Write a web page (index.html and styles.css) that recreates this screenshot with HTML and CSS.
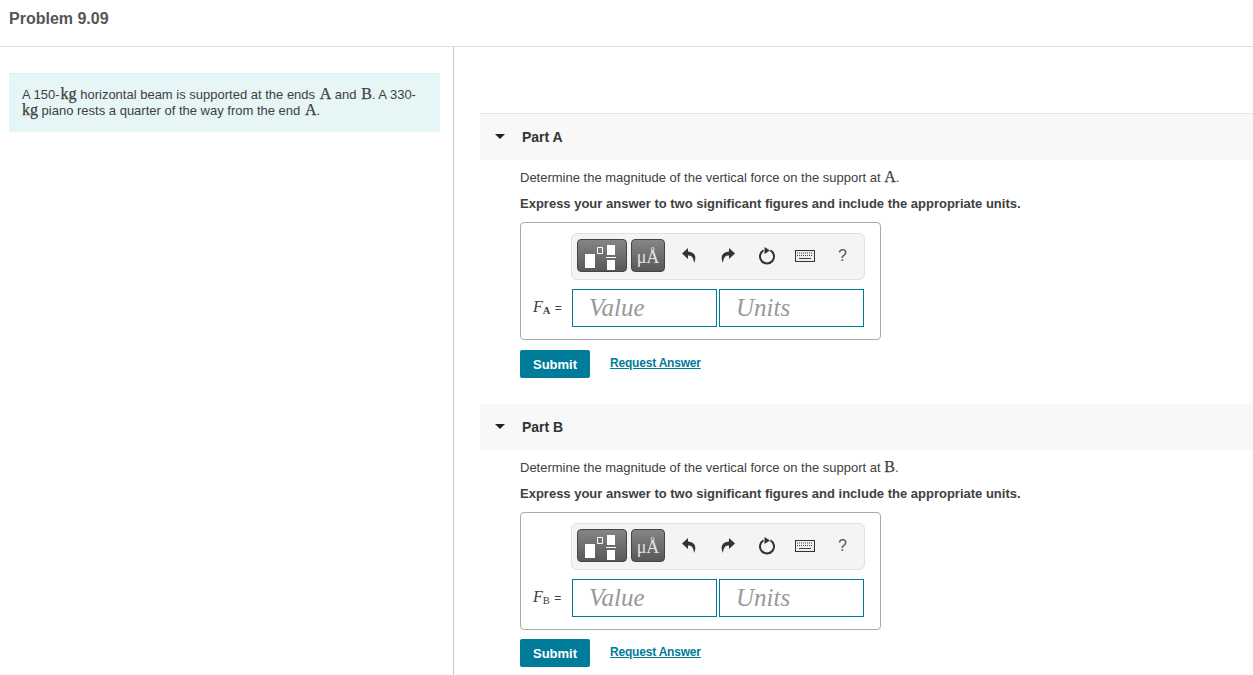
FILE: index.html
```html
<!DOCTYPE html>
<html lang="en">
<head>
<meta charset="utf-8">
<title>Problem 9.09</title>
<link rel="stylesheet" href="styles.css">
</head>
<body>
<header class="top"><h1>Problem 9.09</h1></header>
<main class="layout">
  <aside class="intro">
    <p class="statement">A 150-<span class="m">kg</span> horizontal beam is supported at the ends <span class="m">A</span> and <span class="m">B</span>. A 330-<br><span class="m">kg</span> piano rests a quarter of the way from the end <span class="m">A</span>.</p>
  </aside>
  <section class="parts">
    <div class="part part-a">
      <div class="part-head"><svg class="caret" viewBox="0 0 10 5"><path d="M0 0h10L5 5z"/></svg><h2>Part A</h2></div>
      <div class="part-body">
        <p class="q">Determine the magnitude of the vertical force on the support at <span class="m">A</span>.</p>
        <p class="q strong">Express your answer to two significant figures and include the appropriate units.</p>
        <div class="answer">
          <div class="toolbar">
            <div class="tool tool-tpl"><svg width="31" height="25" viewBox="0 0 31 25"><path fill="#fff" d="M0 9h10v14H0zM22 0h8v10h-8zM22 15h8v10h-8zM21 12h10v1H21z"/><path fill="none" stroke="#fff" d="M12.500 2.500h5v6h-5z"/></svg></div>
            <div class="tool tool-mu"><span>μÅ</span></div>
            <svg class="ic ic-undo" viewBox="0 0 14 15"><path d="M6 0 0 5.500 6 11V7.500c3.500 0 5.500 1.500 6 7.500 3-6 1-11-6-11.500z"/></svg>
            <svg class="ic ic-redo" viewBox="0 0 14 15"><path d="M8 0l6 5.500L8 11V7.500c-3.500 0-5.500 1.500-6 7.500C-1 9 1 4 8 3.500z"/></svg>
            <svg class="ic ic-reset" viewBox="0 0 18 18"><path fill="none" stroke="#333" stroke-width="2" d="M5.500 3.440a7 7 0 1 0 7 0"/><path fill="#333" d="M6.500 0l5.500 3.500-5.500 3.500z"/></svg>
            <svg class="ic ic-kbd" viewBox="0 0 20 12"><rect x=".5" y=".5" width="19" height="11" fill="#eee" stroke="#333"/><path stroke="#444" stroke-dasharray="1 1" d="M2 3h16M2 5.500h16"/><path stroke="#444" d="M4 8.500h12"/></svg>
            <span class="help">?</span>
          </div>
          <div class="row">
            <span class="label"><i>F</i><b>A</b> =</span>
            <div class="field">Value</div>
            <div class="field units">Units</div>
          </div>
        </div>
        <div class="actions"><button class="submit">Submit</button><a class="req" href="#">Request Answer</a></div>
      </div>
    </div>
    <div class="part part-b">
      <div class="part-head"><svg class="caret" viewBox="0 0 10 5"><path d="M0 0h10L5 5z"/></svg><h2>Part B</h2></div>
      <div class="part-body">
        <p class="q">Determine the magnitude of the vertical force on the support at <span class="m">B</span>.</p>
        <p class="q strong">Express your answer to two significant figures and include the appropriate units.</p>
        <div class="answer">
          <div class="toolbar">
            <div class="tool tool-tpl"><svg width="31" height="25" viewBox="0 0 31 25"><path fill="#fff" d="M0 9h10v14H0zM22 0h8v10h-8zM22 15h8v10h-8zM21 12h10v1H21z"/><path fill="none" stroke="#fff" d="M12.500 2.500h5v6h-5z"/></svg></div>
            <div class="tool tool-mu"><span>μÅ</span></div>
            <svg class="ic ic-undo" viewBox="0 0 14 15"><path d="M6 0 0 5.500 6 11V7.500c3.500 0 5.500 1.500 6 7.500 3-6 1-11-6-11.500z"/></svg>
            <svg class="ic ic-redo" viewBox="0 0 14 15"><path d="M8 0l6 5.500L8 11V7.500c-3.500 0-5.500 1.500-6 7.500C-1 9 1 4 8 3.500z"/></svg>
            <svg class="ic ic-reset" viewBox="0 0 18 18"><path fill="none" stroke="#333" stroke-width="2" d="M5.500 3.440a7 7 0 1 0 7 0"/><path fill="#333" d="M6.500 0l5.500 3.500-5.500 3.500z"/></svg>
            <svg class="ic ic-kbd" viewBox="0 0 20 12"><rect x=".5" y=".5" width="19" height="11" fill="#eee" stroke="#333"/><path stroke="#444" stroke-dasharray="1 1" d="M2 3h16M2 5.500h16"/><path stroke="#444" d="M4 8.500h12"/></svg>
            <span class="help">?</span>
          </div>
          <div class="row">
            <span class="label"><i>F</i><b>B</b> =</span>
            <div class="field">Value</div>
            <div class="field units">Units</div>
          </div>
        </div>
        <div class="actions"><button class="submit">Submit</button><a class="req" href="#">Request Answer</a></div>
      </div>
    </div>
  </section>
</main>
</body>
</html>
```
FILE: styles.css
```css
* { box-sizing: border-box; }
html, body { margin: 0; height: 100%; overflow: hidden; background: #fff; }
body { width: 1253px; height: 675px; font-family: "Liberation Sans", Arial, sans-serif; font-size: 13px; color: #404040; }
.top { height: 47px; border-bottom: 1px solid #dcdfe3; padding: 10px 0 0 9px; }
.top h1 { margin: 0; font-size: 16px; line-height: 18px; font-weight: 700; color: #555; }
.layout { display: flex; height: 628px; }
.intro { width: 454px; flex: none; border-right: 1px solid #c3cbd8; padding: 26px 13px 0 9px; }
.statement { margin: 0; height: 59px; background: #e6f5f6; border-top: 1px solid #dfe9ea; padding: 13px 13px 0; line-height: 16px; font-size: 13px; }
.statement .m { margin-left: 1px; }
.statement br + .m { margin-left: 0; }
.m { font-family: "Liberation Serif", serif; font-size: 16px; line-height: 0; -webkit-text-stroke: .25px #404040; }
.parts { flex: 1; padding: 66px 0 0 26px; }
.part-b { margin-top: 26px; }
.part-head { height: 47px; background: #f8f8f8; border-top: 1px solid #e6e6e6; display: flex; align-items: center; padding-left: 15px; }
.part-b .part-head { height: 46px; border-top: 0; }
.caret { width: 10px; height: 5px; fill: #222; margin-right: 17px; margin-bottom: 2px; }
.part-head h2 { margin: 0; font-size: 14px; font-weight: 700; color: #333; }
.part-body { padding: 9px 0 0 40px; }
.q { margin: 0; line-height: 17px; height: 26px; }
.strong { font-weight: 700; height: 27px; }
.answer { width: 361px; height: 118px; border: 1px solid #aaa; border-radius: 4px; padding: 10px 16px 0 50px; }
.toolbar { width: 294px; height: 47px; background: #f4f4f4; border: 1px solid #e0e0e0; border-radius: 6px; display: flex; align-items: center; padding-left: 5px; }
.tool { height: 33px; margin-bottom: 2px; border-radius: 4px; border: 1px solid #444; background: linear-gradient(#858585, #585858); display: flex; align-items: center; justify-content: center; }
.tool-tpl { width: 50px; padding: 3px 0 0 7px; justify-content: flex-start; }
.tool-mu { width: 34px; margin-left: 4px; color: #e4e4e4; font-family: "Liberation Serif", serif; font-size: 18px; padding-top: 3px; }
.ic { fill: #333; flex: none; margin-bottom: 2px; }
.ic-undo { width: 14px; height: 15px; margin-left: 17px; }
.ic-redo { width: 14px; height: 15px; margin-left: 25px; }
.ic-reset { width: 18px; height: 18px; margin-left: 23px; }
.ic-kbd { width: 20px; height: 12px; margin-left: 19px; }
.help { margin: 0 0 2px 23px; font-size: 16px; color: #555; }
.row { display: flex; align-items: stretch; margin: 9px 0 0 -39px; height: 38px; }
.label { width: 40px; padding-left: 1px; margin-bottom: 2px; align-self: center; font-size: 12px; white-space: nowrap; }
.label i { font-family: "Liberation Serif", serif; font-size: 16px; }
.label b { font-family: "Liberation Serif", serif; font-weight: 700; font-size: 10.500px; position: relative; top: 2px; margin-right: 1px; }
.part-b .label b { font-weight: 400; }
.field { width: 145px; height: 38px; border: 1px solid #007c9a; padding-left: 16px; font-family: "Liberation Serif", serif; font-style: italic; font-size: 25px; line-height: 35px; color: #999; }
.units { margin-left: 2px; }
.actions { display: flex; align-items: flex-start; margin-top: 10px; }
.part-b .actions { margin-top: 9px; }
.submit { width: 70px; height: 28px; border: 0; border-radius: 2px; background: #007c9a; color: #fff; font-family: "Liberation Sans", sans-serif; font-size: 13px; font-weight: 700; padding: 0; }
.req { margin: 6px 0 0 20px; font-size: 12px; letter-spacing: -.2px; font-weight: 700; color: #007c9a; text-decoration: underline; }
```
